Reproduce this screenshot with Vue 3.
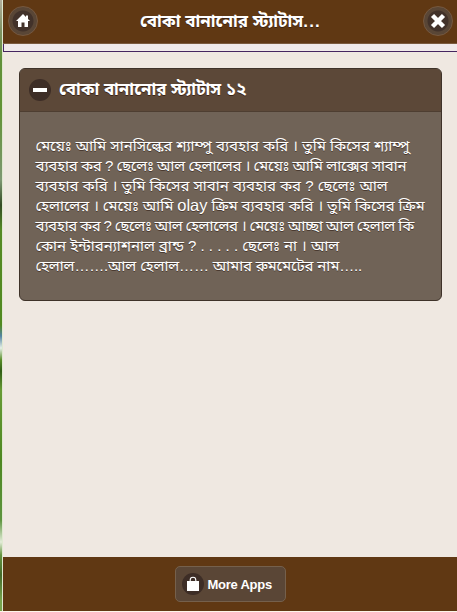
<script setup>
const title = 'বোকা বানানোর স্ট্যাটাস'
const heading = 'বোকা বানানোর স্ট্যাটাস ১২'
const lines = [
  { track: 0, gap: 0, parts: ['মেয়েঃ আমি সানসিল্কের শ্যাম্পু ব্যবহার করি । তুমি কিসের শ্যাম্পু'] },
  { track: -0.25, gap: -0.4, parts: ['ব্যবহার কর ? ছেলেঃ আল হেলালের । মেয়েঃ আমি লাক্সের সাবান'] },
  { track: 0, gap: 0, parts: ['ব্যবহার করি । তুমি কিসের সাবান ব্যবহার কর ? ছেলেঃ আল'] },
  { track: 0, gap: -0.2, parts: ['হেলালের । মেয়েঃ আমি ', 'olay', ' ক্রিম ব্যবহার করি । তুমি কিসের ক্রিম'] },
  { track: -0.4, gap: -0.5, parts: ['ব্যবহার কর ? ছেলেঃ আল হেলালের । মেয়েঃ আচ্ছা আল হেলাল কি'] },
  { track: 0, gap: 0, parts: ['কোন ইন্টারন্যাশনাল ব্রান্ড ? . . . . . ছেলেঃ না । আল'] },
  { track: -0.15, gap: 0, parts: ['হেলাল…….আল হেলাল…… আমার রুমমেটের নাম…..'] },
]
</script>

<template>
  <div class="screen">
    <div class="edge"></div>
    <div class="page">
      <header class="bar header">
        <button class="round" aria-label="Home">
          <svg width="18" height="18" viewBox="0 0 18 18"><path fill="#fff" d="M9 2 2 9h2v6h3.5v-4.500h3V15H14V9h2L14 7V3.500h-2V5z" /></svg>
        </button>
        <h1>{{ title }}<span class="dots">...</span></h1>
        <button class="round" aria-label="Close">
          <svg width="18" height="18" viewBox="0 0 18 18"><path stroke="#fff" stroke-width="4.4" d="M3.5 3.5l11 11M14.500 3.5l-11 11" /></svg>
        </button>
      </header>
      <div class="frame"></div>
      <main>
        <section class="card">
          <div class="card-head">
            <span class="minus"><i></i></span>
            <h2>{{ heading }}</h2>
          </div>
          <div class="card-body">
            <div v-for="(line, i) in lines" :key="i" class="line" :style="{ letterSpacing: line.track + 'px', wordSpacing: line.gap + 'px' }"><span v-for="(part, j) in line.parts" :key="j" :class="{ latin: j === 1 }">{{ part }}</span></div>
          </div>
        </section>
      </main>
      <footer class="bar footer">
        <button class="more">
          <span class="bag">
            <svg width="14" height="16" viewBox="0 0 14 16"><path fill="#fff" d="M1 5h12v10H1z" /><path fill="none" stroke="#fff" stroke-width="1.1" d="M4.200 6V4a2.800 2.800 0 0 1 5.600 0v2" /></svg>
          </span>
          <span>More Apps</span>
        </button>
      </footer>
    </div>
  </div>
</template>

<style>
body { background: #fff; overflow: hidden; }
</style>

<style scoped>
* { box-sizing: border-box; }
.screen {
  display: flex;
  width: 457px;
  height: 612px;
  padding-bottom: 1px;
  background: #fdf5ea;
  font-family: "Liberation Sans", "Noto Sans Bengali", sans-serif;
  color: #fff;
}
.edge {
  width: 3px;
  border-right: 1px solid #dfe9d0;
  background: linear-gradient(#b2ad9c 0, #7f9363 30px, #61903a 60px, #629335 110px, #7e9873 180px, #344b25 205px, #568a25 230px, #518920 325px, #5484a2 336px, #e5efe6 348px, #598d28 360px, #315d16 371px, #689b36 390px, #4e8721 460px, #5e943f 520px, #e3ecd8 542px, #659541 555px, #446b2a 575px, #76a34d 600px);
}
.page { flex: 1; min-width: 0; display: flex; flex-direction: column; background: #efe8e1; }
.bar { background: #603813; }
.header { height: 44px; padding: 0 4px 2px 5px; display: flex; align-items: center; justify-content: space-between; border-bottom: 1px solid #7b5b3e; }
h1, h2 { margin: 0; font-weight: 700; white-space: nowrap; text-shadow: 0 1px 0 #3c2415; }
h1 { font-size: 17px; padding-top: 3px; }
.dots { letter-spacing: 1.2px; }
.round {
  width: 30px; height: 30px; padding: 0; border: 1px solid #755840; border-radius: 50%;
  background: radial-gradient(circle, #42322a 0 10px, #594636 11px);
  display: flex; align-items: center; justify-content: center;
}
.frame { height: 8px; border: solid #452560; border-width: 0 0 1px 1px; background: #f0eae9; }
main { flex: 1; padding: 16px 15px 0 16px; }
.card { height: 233px; border: 1px solid #3e3229; border-radius: 6px; background: #706357; overflow: hidden; }
.card-head { height: 43px; padding-left: 9px; display: flex; align-items: center; background: #5c4838; border-bottom: 1px solid #4e3e31; }
.minus { width: 22px; height: 22px; border-radius: 50%; background: #3d2d26; display: flex; align-items: center; justify-content: center; }
.minus i { width: 14px; height: 4px; background: #fff; }
h2 { margin-left: 8px; padding-top: 2px; font-size: 16.9px; }
.card-body { padding: 24px 0 0 15.5px; font-size: 15px; line-height: 20px; text-shadow: 0 1px 0 #493a30; }
.line { height: 20px; white-space: pre; }
.latin { font-size: 16.5px; line-height: 1; }
.footer { height: 54px; display: flex; align-items: center; justify-content: center; }
.more {
  width: 111px; height: 36px; padding: 0 0 0 6px; border: 1px solid #75604c; border-radius: 5px; background: #5a4636;
  display: flex; align-items: center; gap: 4px; color: #fff;
  font: 700 13px "Liberation Sans", sans-serif; letter-spacing: -0.25px; white-space: nowrap;
}
.bag { width: 22px; height: 22px; border-radius: 50%; background: #3d2d26; display: flex; align-items: center; justify-content: center; }
</style>
